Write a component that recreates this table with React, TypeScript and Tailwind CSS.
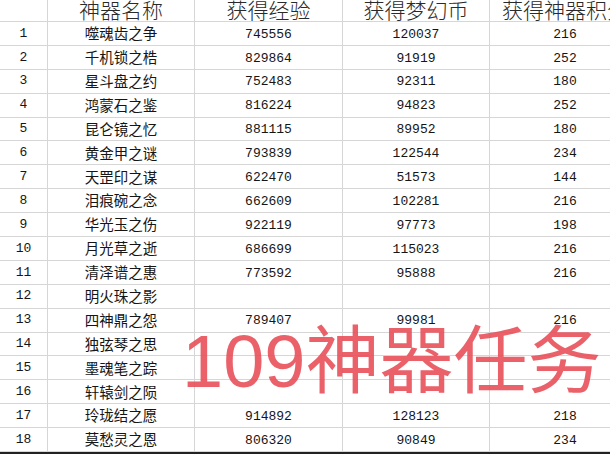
import React from "react";

type Row = [string, string, string, string];

const rows: Row[] = [
  ["噬魂齿之争", "745556", "120037", "216"],
  ["千机锁之梏", "829864", "91919", "252"],
  ["星斗盘之约", "752483", "92311", "180"],
  ["鸿蒙石之鉴", "816224", "94823", "252"],
  ["昆仑镜之忆", "881115", "89952", "180"],
  ["黄金甲之谜", "793839", "122544", "234"],
  ["天罡印之谋", "622470", "51573", "144"],
  ["泪痕碗之念", "662609", "102281", "216"],
  ["华光玉之伤", "922119", "97773", "198"],
  ["月光草之逝", "686699", "115023", "216"],
  ["清泽谱之惠", "773592", "95888", "216"],
  ["明火珠之影", "", "", ""],
  ["四神鼎之怨", "789407", "99981", "216"],
  ["独弦琴之思", "", "", ""],
  ["墨魂笔之踪", "", "", ""],
  ["轩辕剑之陨", "", "", ""],
  ["玲珑结之愿", "914892", "128123", "218"],
  ["莫愁灵之恩", "806320", "90849", "234"],
];

const cjk = { fontFamily: '"Noto Sans CJK SC", sans-serif' };
const mono = { fontFamily: '"Liberation Mono", "DejaVu Sans Mono", monospace' };

export default function App() {
  return (
    <div className="relative w-[610px] h-[454px] overflow-hidden bg-white">
      <div className="flex flex-col w-[640px]">
        {/* header */}
        <div
          className="flex h-[22px] border-b border-[#d6d6d6] text-[21px] font-light text-[#2a2a2a] leading-none"
          style={cjk}
        >
          <div className="w-[48px] border-r border-[#d6d6d6]" />
          <div className="w-[147px] border-r border-[#d6d6d6] flex items-end justify-center pb-[1px]">神器名称</div>
          <div className="w-[148px] border-r border-[#d6d6d6] flex items-end justify-center pb-[1px]">获得经验</div>
          <div className="w-[147px] border-r border-[#d6d6d6] flex items-end justify-center pb-[1px]">获得梦幻币</div>
          <div className="w-[150px] flex items-end justify-center pb-[1px] whitespace-nowrap">获得神器积分</div>
        </div>
        {rows.map((r, i) => (
          <div key={i} className="flex h-[23.9px] border-b border-[#d6d6d6] text-[#151515]">
            <div className="w-[48px] border-r border-[#d6d6d6] flex items-center justify-center text-[13px]" style={mono}>
              {i + 1}
            </div>
            <div
              className="w-[147px] border-r border-[#d6d6d6] flex items-center justify-center text-[14.5px] leading-none"
              style={cjk}
            >
              {r[0]}
            </div>
            <div className="w-[148px] border-r border-[#d6d6d6] flex items-center justify-center text-[13px] pt-[2px]" style={mono}>
              {r[1]}
            </div>
            <div className="w-[147px] border-r border-[#d6d6d6] flex items-center justify-center text-[13px] pt-[2px]" style={mono}>
              {r[2]}
            </div>
            <div className="w-[150px] flex items-center justify-center text-[13px] pt-[2px]" style={mono}>
              {r[3]}
            </div>
          </div>
        ))}
      </div>
      <div className="absolute left-0 bottom-0 w-full h-[2px] bg-[#222]" />
      <div
        className="absolute left-[182px] top-[325px] text-[74px] leading-none whitespace-nowrap text-[#e8505a]/90"
        style={{ fontFamily: '"Liberation Sans", "Noto Sans CJK SC", sans-serif' }}
      >
        109神器任务
      </div>
    </div>
  );
}
